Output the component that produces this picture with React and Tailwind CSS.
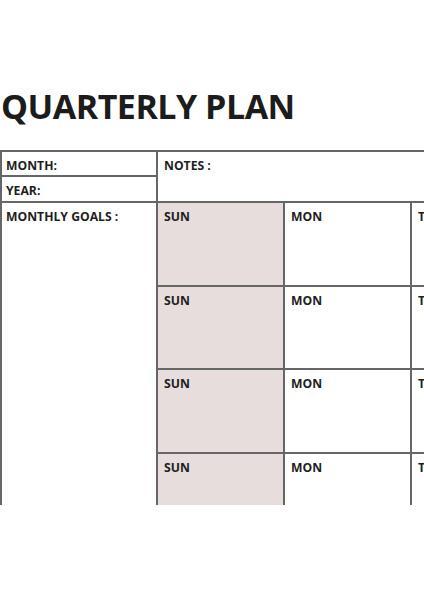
const rows = [0, 1, 2, 3];
const days = ['SUN', 'MON', 'TUE'];

const Cell = ({ label, className }) => (
  <div className={`border-r-2 border-b-2 border-[#666666] pl-[6px] pt-[8px] ${className}`}>
    <p className="text-[12.2px] leading-none font-bold text-[#1e1e1e]">{label}</p>
  </div>
);

export default function App() {
  return (
    <div className="w-[424px] h-[600px] overflow-hidden bg-white" style={{ fontFamily: '"Open Sans", sans-serif' }}>
      <h1 className="mt-[84px] ml-[1px] text-[34px] leading-[44px] font-bold text-[#1c1c1c] tracking-[-0.5px] whitespace-nowrap">
        QUARTERLY PLAN
      </h1>
      <div className="mt-[22px] w-[560px] h-[355px] overflow-hidden flex border-t-2 border-l-2 border-[#666666]">
        <div className="w-[156px] shrink-0 flex flex-col">
          <div className="h-[25px] border-r-2 border-b-2 border-[#666666] pl-[4px] pt-[8px]">
            <p className="text-[12.2px] leading-none font-bold text-[#1e1e1e]">MONTH:</p>
          </div>
          <div className="h-[26px] border-r-2 border-b-2 border-[#666666] pl-[4px] pt-[8px]">
            <p className="text-[12.2px] leading-none font-bold text-[#1e1e1e]">YEAR:</p>
          </div>
          <div className="flex-1 border-r-2 border-[#666666] pl-[4px] pt-[8px]">
            <p className="text-[12.2px] leading-none font-bold text-[#1e1e1e]">MONTHLY GOALS :</p>
          </div>
        </div>
        <div className="flex-1 flex flex-col">
          <div className="h-[51px] shrink-0 border-b-2 border-[#666666] pl-[6px] pt-[8px]">
            <p className="text-[12.2px] leading-none font-bold text-[#1e1e1e]">NOTES :</p>
          </div>
          {rows.map((r) => (
            <div key={r} className="h-[83.5px] shrink-0 grid grid-cols-[127px_127px_127px]">
              {days.map((d) => (
                <Cell key={d} label={d} className={d === 'SUN' ? 'bg-[#e8dddd]' : 'bg-white'} />
              ))}
            </div>
          ))}
        </div>
      </div>
    </div>
  );
}
